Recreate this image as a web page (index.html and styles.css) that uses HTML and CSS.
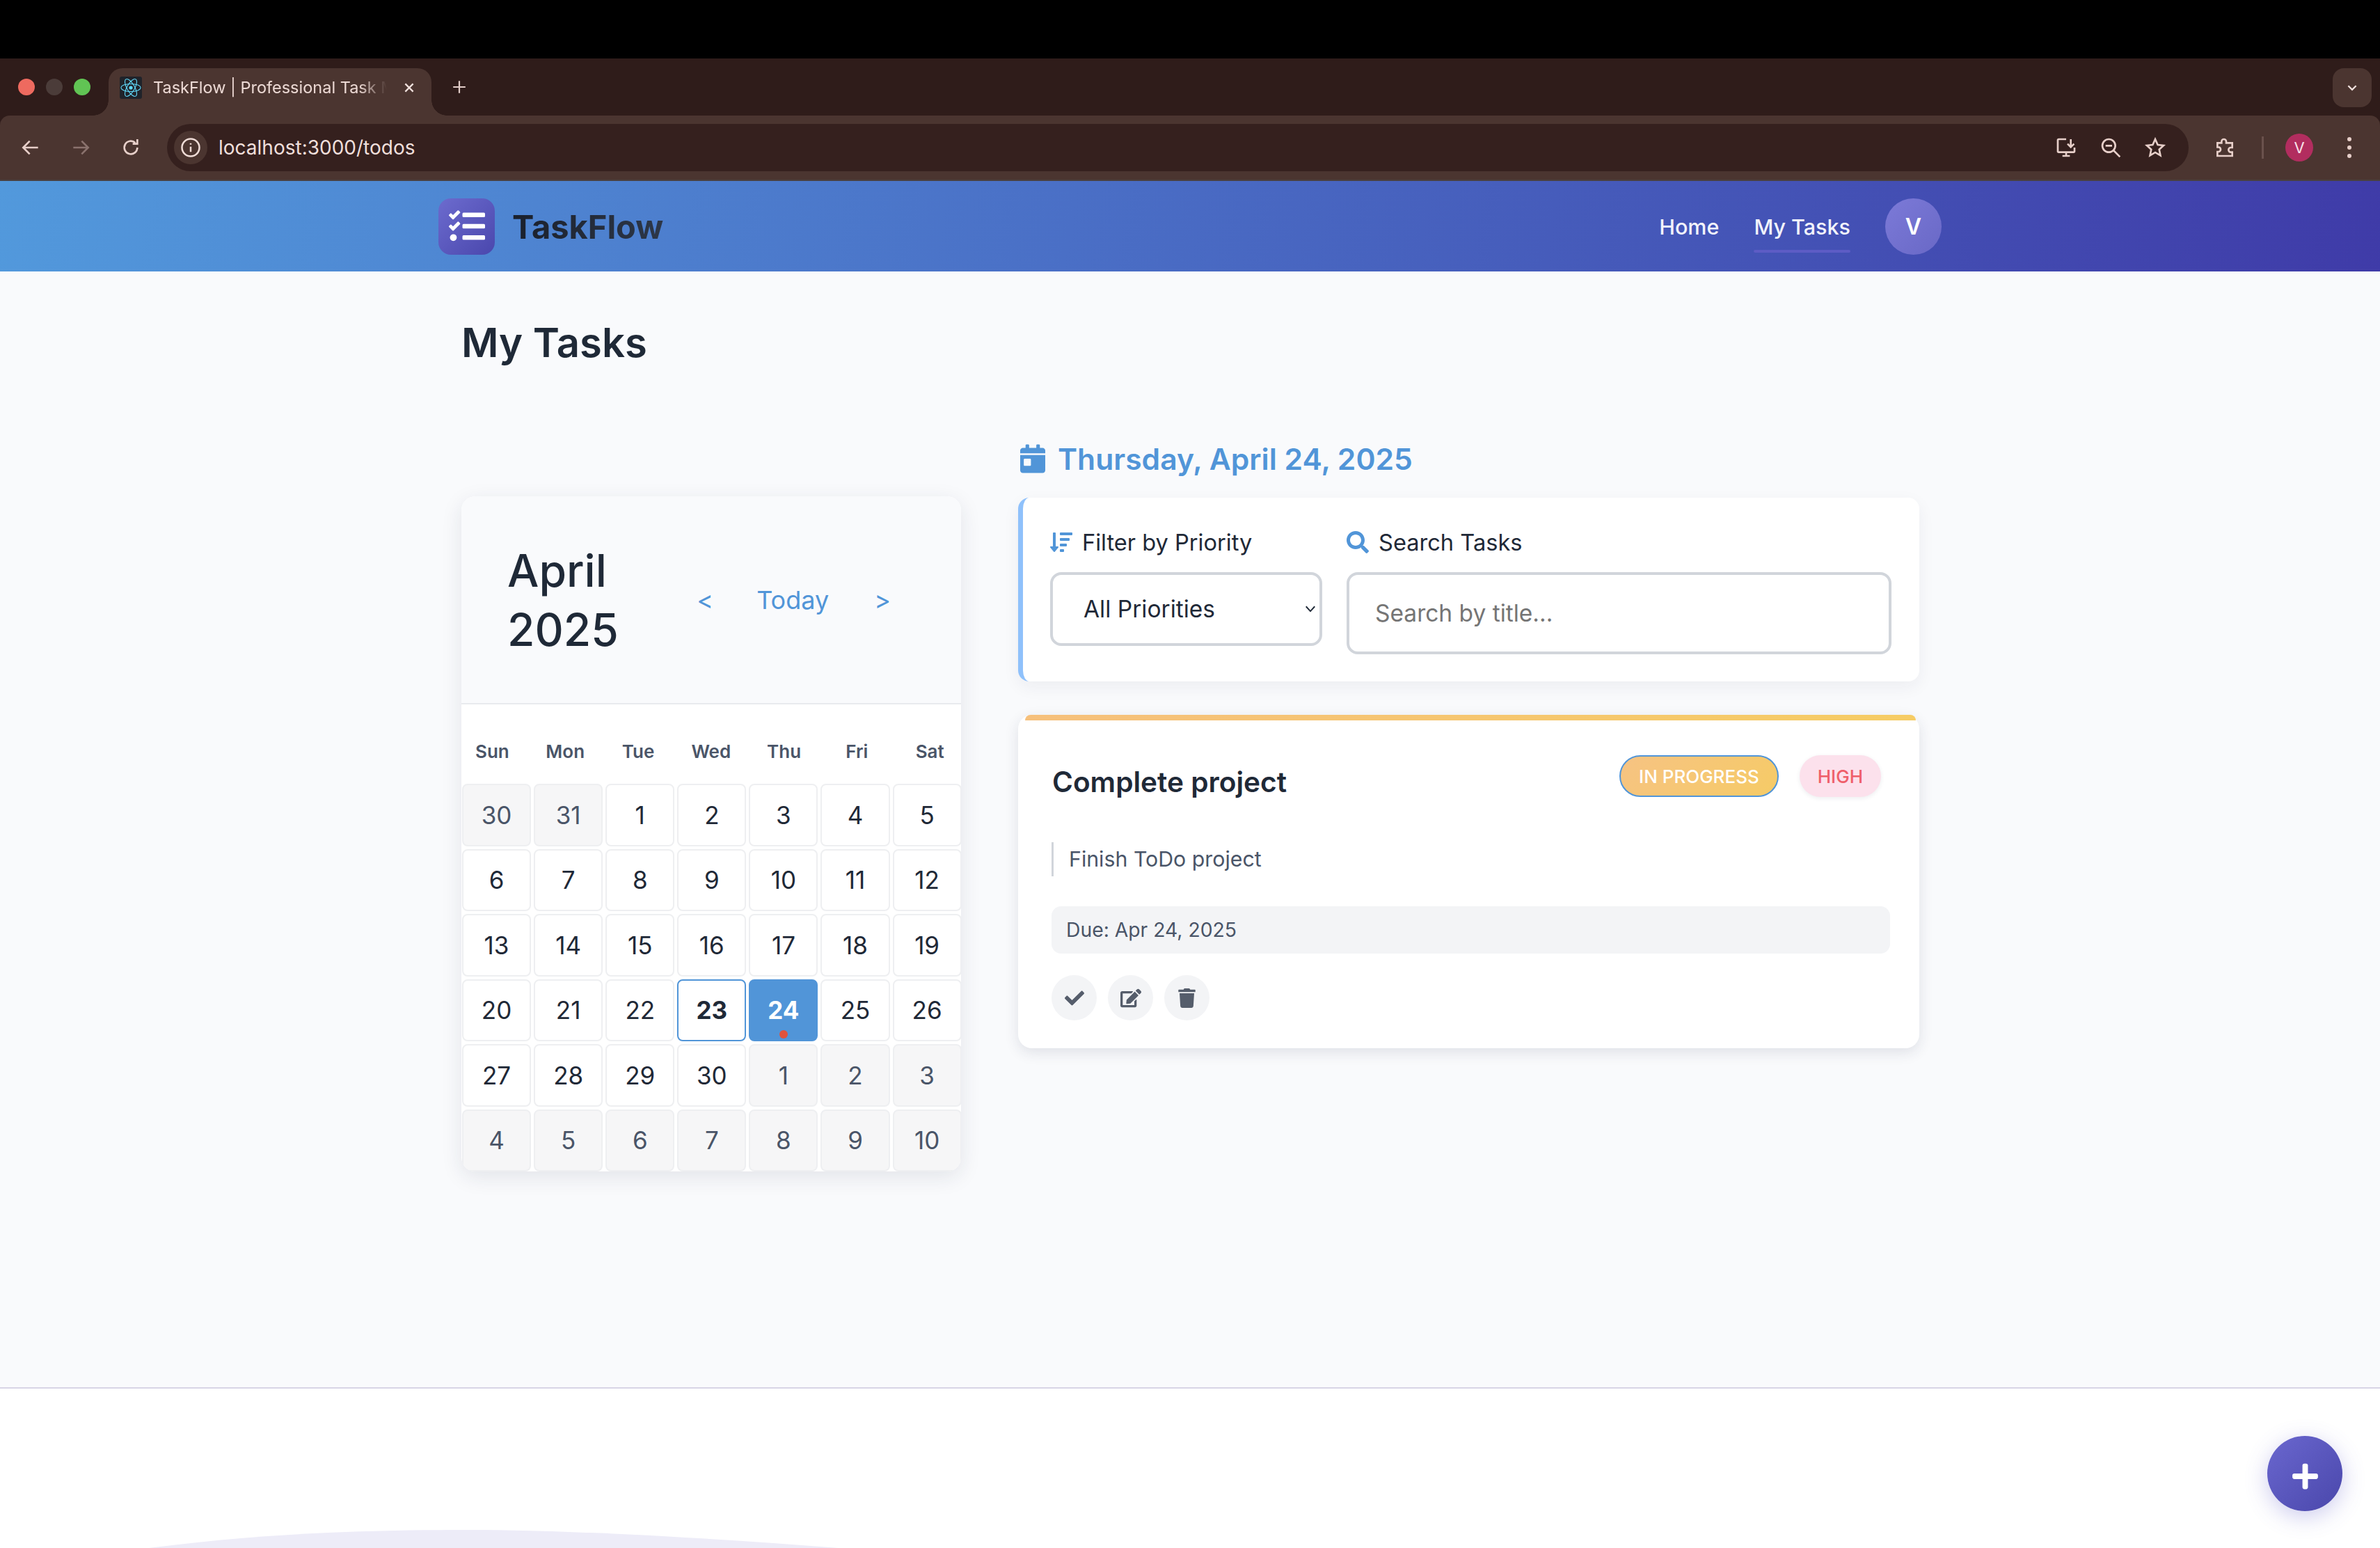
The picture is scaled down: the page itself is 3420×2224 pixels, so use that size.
FILE: index.html
```html
<!DOCTYPE html>
<html lang="en">
<head>
  <meta charset="UTF-8">
  <meta name="viewport" content="width=device-width, initial-scale=1.0">
  <title>TaskFlow | Professional Task Manager</title>
  <link rel="stylesheet" href="styles.css">
</head>
<body>
  <div class="screen-edge"></div>

  <div class="browser-chrome">
    <div class="tabstrip">
      <div class="traffic">
        <span class="light red"></span>
        <span class="light grey"></span>
        <span class="light green"></span>
      </div>
      <div class="tab">
        <svg class="favicon" viewBox="0 0 32 32">
          <rect width="32" height="32" rx="3" fill="#20232a"/>
          <g fill="none" stroke="#61dafb" stroke-width="1.1">
            <ellipse cx="16" cy="16" rx="14" ry="5.5"/>
            <ellipse cx="16" cy="16" rx="14" ry="5.5" transform="rotate(60 16 16)"/>
            <ellipse cx="16" cy="16" rx="14" ry="5.5" transform="rotate(120 16 16)"/>
          </g>
          <circle cx="16" cy="16" r="2.6" fill="#61dafb"/>
        </svg>
        <span class="tab-title">TaskFlow | Professional Task Manager</span>
        <svg class="tab-close" viewBox="0 0 16 16"><path d="M3 3l10 10M13 3L3 13"/></svg>
      </div>
      <svg class="new-tab" viewBox="0 0 20 20"><path d="M10 2v16M2 10h16"/></svg>
      <div class="tab-search">
        <svg viewBox="0 0 16 16"><path d="M3 5.5l5 5 5-5"/></svg>
      </div>
    </div>

    <div class="toolbar">
      <svg class="tool-icon" viewBox="0 0 24 24"><path d="M20 12H5M11 5l-7 7 7 7"/></svg>
      <svg class="tool-icon dim" viewBox="0 0 24 24"><path d="M4 12h15M13 5l7 7-7 7"/></svg>
      <svg class="tool-icon" viewBox="0 0 24 24"><path d="M19 12a7 7 0 1 1-2.2-5.1M19 3v5h-5"/></svg>
      <div class="omnibox">
        <div class="site-info">
          <svg viewBox="0 0 24 24"><circle cx="12" cy="12" r="10"/><path d="M12 11v6M12 7v1.6"/></svg>
        </div>
        <span class="url">localhost:3000/todos</span>
        <div class="omni-icons">
          <svg class="tool-icon" viewBox="0 0 24 24"><path d="M12 3H4a1 1 0 0 0-1 1v12a1 1 0 0 0 1 1h16a1 1 0 0 0 1-1v-4M8 21h8M12 17v4M17 3v8M13.5 8l3.5 3.500 3.500-3.500"/></svg>
          <svg class="tool-icon" viewBox="0 0 24 24"><circle cx="10" cy="10" r="7"/><path d="M15 15l7 7M6.500 10h7"/></svg>
          <svg class="tool-icon" viewBox="0 0 24 24"><path d="M12 3l2.700 6 6.300.7-4.700 4.300 1.300 6.500L12 17.200 6.400 20.500l1.300-6.500L3 9.700 9.300 9z"/></svg>
        </div>
      </div>
      <svg class="tool-icon ext" viewBox="0 0 24 24"><path d="M4 7h4.500V5.500a2.500 2.500 0 0 1 5 0V7H20v5h-1.500a2.500 2.500 0 0 0 0 5H20v4H4v-4.500h1a2.500 2.500 0 0 0 0-5H4z"/></svg>
      <span class="tool-divider"></span>
      <span class="profile">V</span>
      <div class="menu-dots"><span></span><span></span><span></span></div>
    </div>
    <div class="toolbar-edge"></div>
  </div>

  <header class="app-header">
    <div class="header-inner">
      <a class="brand">
        <span class="brand-mark">
          <svg viewBox="0 0 512 512"><path d="M139.61 35.5a12 12 0 0 0-17 0L58.93 98.81l-22.7-22.12a12 12 0 0 0-17 0L3.53 92.41a12 12 0 0 0 0 17l47.59 47.4a12.78 12.78 0 0 0 17.61 0l15.59-15.62L156.52 69a12.09 12.09 0 0 0 .09-17zm0 159.19a12 12 0 0 0-17 0l-63.68 63.72-22.7-22.1a12 12 0 0 0-17 0L3.53 252a12 12 0 0 0 0 17L51 316.5a12.77 12.77 0 0 0 17.6 0l15.7-15.69 72.2-72.22a12 12 0 0 0 .09-16.9zM64 368c-26.49 0-48.59 21.5-48.59 48S37.53 464 64 464a48 48 0 0 0 0-96zm432 16H208a16 16 0 0 0-16 16v32a16 16 0 0 0 16 16h288a16 16 0 0 0 16-16v-32a16 16 0 0 0-16-16zm0-320H208a16 16 0 0 0-16 16v32a16 16 0 0 0 16 16h288a16 16 0 0 0 16-16V80a16 16 0 0 0-16-16zm0 160H208a16 16 0 0 0-16 16v32a16 16 0 0 0 16 16h288a16 16 0 0 0 16-16v-32a16 16 0 0 0-16-16z"/></svg>
        </span>
        <span class="brand-name">TaskFlow</span>
      </a>
      <nav class="main-nav">
        <a class="nav-link">Home</a>
        <a class="nav-link active">My Tasks</a>
        <span class="avatar">V</span>
      </nav>
    </div>
  </header>

  <main class="page">
    <h1 class="page-title">My Tasks</h1>

    <div class="todo-layout">
      <section class="calendar">
        <div class="cal-header">
          <h2 class="cal-title">April 2025</h2>
          <div class="cal-nav">
            <button class="cal-btn prev">&lt;</button>
            <button class="cal-btn">Today</button>
            <button class="cal-btn">&gt;</button>
          </div>
        </div>
        <div class="cal-weekdays">
          <span>Sun</span><span>Mon</span><span>Tue</span><span>Wed</span><span>Thu</span><span>Fri</span><span>Sat</span>
        </div>
        <div class="cal-grid">
          <div class="day other">30</div><div class="day other">31</div><div class="day">1</div><div class="day">2</div><div class="day">3</div><div class="day">4</div><div class="day">5</div>
          <div class="day">6</div><div class="day">7</div><div class="day">8</div><div class="day">9</div><div class="day">10</div><div class="day">11</div><div class="day">12</div>
          <div class="day">13</div><div class="day">14</div><div class="day">15</div><div class="day">16</div><div class="day">17</div><div class="day">18</div><div class="day">19</div>
          <div class="day">20</div><div class="day">21</div><div class="day">22</div><div class="day today">23</div><div class="day selected">24<span class="task-dot"></span></div><div class="day">25</div><div class="day">26</div>
          <div class="day">27</div><div class="day">28</div><div class="day">29</div><div class="day">30</div><div class="day other">1</div><div class="day other">2</div><div class="day other">3</div>
          <div class="day other">4</div><div class="day other">5</div><div class="day other">6</div><div class="day other">7</div><div class="day other">8</div><div class="day other">9</div><div class="day other">10</div>
        </div>
      </section>

      <section class="tasks">
        <h2 class="date-heading">
          <svg viewBox="0 0 448 512"><path d="M0 464c0 26.500 21.500 48 48 48h352c26.500 0 48-21.500 48-48V192H0v272zm64-192c0-8.800 7.200-16 16-16h96c8.800 0 16 7.200 16 16v96c0 8.800-7.200 16-16 16H80c-8.800 0-16-7.200-16-16v-96zM400 64h-48V16c0-8.800-7.200-16-16-16h-32c-8.800 0-16 7.200-16 16v48H160V16c0-8.800-7.200-16-16-16h-32c-8.800 0-16 7.200-16 16v48H48C21.500 64 0 85.500 0 112v48h448v-48c0-26.500-21.500-48-48-48z"/></svg>
          Thursday, April 24, 2025
        </h2>

        <div class="filters">
          <div class="filter-group priority">
            <label class="filter-label">
              <svg viewBox="0 0 512 512"><path d="M304 416h-64a16 16 0 0 0-16 16v32a16 16 0 0 0 16 16h64a16 16 0 0 0 16-16v-32a16 16 0 0 0-16-16zm-128-64h-48V48a16 16 0 0 0-16-16H80a16 16 0 0 0-16 16v304H16c-14.190 0-21.370 17.240-11.290 27.310l80 96a16 16 0 0 0 22.620 0l80-96C197.350 369.260 190.220 352 176 352zm256-192H240a16 16 0 0 0-16 16v32a16 16 0 0 0 16 16h192a16 16 0 0 0 16-16v-32a16 16 0 0 0-16-16zm-64 128H240a16 16 0 0 0-16 16v32a16 16 0 0 0 16 16h128a16 16 0 0 0 16-16v-32a16 16 0 0 0-16-16zM496 32H240a16 16 0 0 0-16 16v32a16 16 0 0 0 16 16h256a16 16 0 0 0 16-16V48a16 16 0 0 0-16-16z"/></svg>
              Filter by Priority
            </label>
            <div class="select-wrap">
              <select class="priority-select">
                <option>All Priorities</option>
                <option>High</option>
                <option>Medium</option>
                <option>Low</option>
              </select>
              <svg class="select-arrow" viewBox="0 0 12 8"><path d="M1 1l5 5.500L11 1"/></svg>
            </div>
          </div>
          <div class="filter-group search">
            <label class="filter-label">
              <svg viewBox="0 0 512 512"><path d="M505 442.700L405.300 343c-4.500-4.500-10.600-7-17-7H372c27.600-35.300 44-79.700 44-128C416 93.100 322.900 0 208 0S0 93.100 0 208s93.100 208 208 208c48.300 0 92.700-16.400 128-44v16.300c0 6.400 2.500 12.500 7 17l99.700 99.700c9.400 9.400 24.600 9.400 33.900 0l28.300-28.300c9.400-9.400 9.400-24.600.1-34zM208 336c-70.700 0-128-57.200-128-128 0-70.700 57.200-128 128-128 70.700 0 128 57.200 128 128 0 70.700-57.200 128-128 128z"/></svg>
              Search Tasks
            </label>
            <input class="search-input" type="text" placeholder="Search by title...">
          </div>
        </div>

        <article class="task-card">
          <div class="task-stripe"></div>
          <div class="task-head">
            <h3 class="task-title">Complete project</h3>
            <div class="task-badges">
              <span class="badge progress">IN PROGRESS</span>
              <span class="badge high">HIGH</span>
            </div>
          </div>
          <p class="task-desc">Finish ToDo project</p>
          <div class="task-due">Due: Apr 24, 2025</div>
          <div class="task-actions">
            <button class="icon-btn"><svg class="ic-check" viewBox="0 0 512 512"><path d="M173.898 439.404l-166.400-166.400c-9.997-9.997-9.997-26.206 0-36.204l36.203-36.204c9.997-9.998 26.207-9.998 36.204 0L192 312.690 432.095 72.596c9.997-9.997 26.207-9.997 36.204 0l36.203 36.204c9.997 9.997 9.997 26.206 0 36.204l-294.400 294.401c-9.998 9.997-26.207 9.997-36.204-.001z"/></svg></button>
            <button class="icon-btn"><svg class="ic-edit" viewBox="0 0 576 512"><path d="M402.600 83.200l90.200 90.200c3.800 3.800 3.800 10 0 13.800L274.400 405.600l-92.800 10.300c-12.400 1.400-22.900-9.100-21.500-21.500l10.300-92.800L388.800 83.200c3.800-3.800 10-3.800 13.800 0zm162-22.900l-48.800-48.800c-15.200-15.200-39.900-15.200-55.200 0l-35.400 35.400c-3.800 3.800-3.800 10 0 13.800l90.200 90.200c3.800 3.800 10 3.800 13.800 0l35.400-35.400c15.200-15.300 15.200-40 0-55.200zM384 346.200V448H64V128h229.800c3.200 0 6.200-1.300 8.500-3.500l40-40c7.600-7.600 2.200-20.500-8.500-20.500H48C21.500 64 0 85.500 0 112v352c0 26.500 21.500 48 48 48h352c26.500 0 48-21.500 48-48V306.200c0-10.700-12.900-16-20.500-8.500l-40 40c-2.200 2.300-3.500 5.300-3.500 8.500z"/></svg></button>
            <button class="icon-btn"><svg class="ic-trash" viewBox="0 0 448 512"><path d="M432 32H312l-9.400-18.700A24 24 0 0 0 281.100 0H166.800a23.720 23.720 0 0 0-21.400 13.300L136 32H16A16 16 0 0 0 0 48v32a16 16 0 0 0 16 16h416a16 16 0 0 0 16-16V48a16 16 0 0 0-16-16zM53.200 467a48 48 0 0 0 47.900 45h245.800a48 48 0 0 0 47.900-45L416 128H32z"/></svg></button>
          </div>
        </article>
      </section>
    </div>
  </main>

  <footer class="page-footer">
    <svg class="footer-wave" viewBox="0 0 1000 30" preserveAspectRatio="none"><path d="M0 30C150 8 290 0 460 0C620 0 820 14 1000 30z"/></svg>
  </footer>

  <button class="fab">
    <svg viewBox="0 0 448 512"><path d="M416 208H272V64c0-17.670-14.330-32-32-32h-32c-17.670 0-32 14.330-32 32v144H32c-17.670 0-32 14.330-32 32v32c0 17.670 14.330 32 32 32h144v144c0 17.670 14.330 32 32 32h32c17.670 0 32-14.330 32-32V304h144c17.670 0 32-14.330 32-32v-32c0-17.670-14.330-32-32-32z"/></svg>
  </button>
</body>
</html>
```

FILE: styles.css
```css
* {
  box-sizing: border-box;
}

html, body {
  height: 100%;
}

body {
  margin: 0;
  display: flex;
  flex-direction: column;
  overflow: hidden;
  background-color: #f9fafc;
  color: #1f2937;
  font-family: Inter, "Liberation Sans", sans-serif;
}

h1, h2, h3, p {
  margin: 0;
}

button {
  border: none;
  background: none;
  font-family: inherit;
  padding: 0;
}

/* browser frame */
.screen-edge {
  height: 84px;
  flex: none;
  background-color: #000;
}

.browser-chrome {
  flex: none;
  background-color: #2f1c1a;
}

.tabstrip {
  height: 82px;
  display: flex;
}

.traffic {
  display: flex;
  gap: 16px;
  padding: 29px 0 0 26px;
  width: 156px;
}

.light {
  width: 24px;
  height: 24px;
  border-radius: 50%;
}

.light.red { background-color: #ee6a5f; }
.light.grey { background-color: #4b3c39; }
.light.green { background-color: #61c454; }

.tab {
  position: relative;
  width: 464px;
  height: 68px;
  margin-top: 14px;
  display: flex;
  align-items: flex-start;
  padding: 12px 0 0 16px;
  background-color: #4b3530;
  border-radius: 20px 20px 0 0;
}

.tab::before,
.tab::after {
  content: "";
  position: absolute;
  bottom: 0;
  width: 22px;
  height: 22px;
}

.tab::before {
  left: -22px;
  background: radial-gradient(circle at 0 0, #2f1c1a 21.500px, #4b3530 22px);
}

.tab::after {
  right: -22px;
  background: radial-gradient(circle at 100% 0, #2f1c1a 21.500px, #4b3530 22px);
}

.favicon {
  width: 32px;
  height: 32px;
  flex: none;
}

.tab-title {
  width: 336px;
  margin-left: 16px;
  overflow: hidden;
  white-space: nowrap;
  font-size: 23.500px;
  line-height: 32px;
  color: #ecd9d4;
  -webkit-mask-image: linear-gradient(to right, #000 88%, transparent);
  mask-image: linear-gradient(to right, #000 88%, transparent);
}

.tab-close {
  width: 18px;
  height: 18px;
  margin: 7px 0 0 23px;
  flex: none;
  fill: none;
  stroke: #f1e1dd;
  stroke-width: 2;
}

.new-tab {
  width: 22px;
  height: 22px;
  margin: 30px 0 0 29px;
  fill: none;
  stroke: #e2cdc8;
  stroke-width: 2;
}

.tab-search {
  width: 56px;
  height: 56px;
  margin: 14px 12px 0 auto;
  display: flex;
  align-items: center;
  justify-content: center;
  border-radius: 16px;
  background-color: #4b3530;
}

.tab-search svg {
  width: 18px;
  height: 18px;
  fill: none;
  stroke: #f1e1dd;
  stroke-width: 2;
}

.toolbar {
  height: 92px;
  display: flex;
  align-items: center;
  padding: 0 0 0 28px;
  background-color: #4b3530;
  border-radius: 14px 14px 0 0;
}

.tool-icon {
  width: 32px;
  height: 32px;
  flex: none;
  fill: none;
  stroke: #e7cfc9;
  stroke-width: 2;
}

.tool-icon.dim {
  stroke: #8a726d;
  margin-left: 40px;
}

.tool-icon + .tool-icon:not(.dim) {
  margin-left: 40px;
}

.omnibox {
  width: 2905px;
  height: 68px;
  margin-left: 36px;
  display: flex;
  align-items: center;
  padding: 0 32px 0 10px;
  border-radius: 34px;
  background-color: #35201e;
}

.site-info {
  width: 48px;
  height: 48px;
  display: flex;
  align-items: center;
  justify-content: center;
  border-radius: 50%;
  background-color: #4b3530;
}

.site-info svg {
  width: 30px;
  height: 30px;
  fill: none;
  stroke: #efdcd7;
  stroke-width: 2;
}

.url {
  margin-left: 16px;
  font-size: 28px;
  color: #efdfdb;
}

.omni-icons {
  display: flex;
  margin-left: auto;
  gap: 32px;
}

.omni-icons .tool-icon + .tool-icon {
  margin-left: 0;
}

.tool-icon.ext {
  margin-left: 36px;
}

.tool-divider {
  width: 3px;
  height: 32px;
  margin-left: 37px;
  background-color: #6a514c;
}

.profile {
  width: 40px;
  height: 40px;
  margin-left: 31px;
  display: flex;
  align-items: center;
  justify-content: center;
  border-radius: 50%;
  background-color: #b22d5f;
  color: #f8e3ea;
  font-size: 22px;
}

.menu-dots {
  display: flex;
  flex-direction: column;
  gap: 6px;
  margin-left: 49px;
}

.menu-dots span {
  width: 6px;
  height: 6px;
  border-radius: 50%;
  background-color: #e7cfc9;
}

.toolbar-edge {
  height: 2px;
  background-color: #4a403f;
}

/* app header */
.app-header {
  height: 130px;
  flex: none;
  background: linear-gradient(100deg, #5299dc 0%, #4a6fc6 45%, #3f3ba8 100%);
}

.header-inner {
  width: 2160px;
  height: 100%;
  margin: 0 auto;
  display: flex;
  align-items: center;
}

.brand {
  display: flex;
  align-items: center;
  gap: 25px;
}

.brand-mark {
  width: 81px;
  height: 81px;
  display: flex;
  align-items: center;
  justify-content: center;
  border-radius: 18px;
  background: linear-gradient(135deg, #6c6bce, #4a47ad);
}

.brand-mark svg {
  width: 52px;
  height: 52px;
  fill: #fff;
}

.brand-name {
  font-size: 47px;
  font-weight: 700;
  background: linear-gradient(90deg, #1a202c, #2d3748);
  -webkit-background-clip: text;
  background-clip: text;
  color: transparent;
}

.main-nav {
  margin-left: auto;
  display: flex;
  align-items: center;
  gap: 50px;
}

.nav-link {
  position: relative;
  font-size: 30.500px;
  font-weight: 500;
  color: #f2f3fb;
}

.nav-link.active::after {
  content: "";
  position: absolute;
  left: 0;
  right: 0;
  bottom: -19px;
  height: 4px;
  border-radius: 2px;
  background-color: #5d5cc5;
}

.avatar {
  width: 81px;
  height: 81px;
  display: flex;
  align-items: center;
  justify-content: center;
  border-radius: 50%;
  background: linear-gradient(135deg, #7c7ad8, #6968c6);
  color: #fff;
  font-size: 32px;
  font-weight: 600;
}

/* page */
.page {
  flex: 1;
  width: 2160px;
  margin: 0 auto;
  padding: 66px 33px 0;
}

.page-title {
  font-size: 58px;
  font-weight: 600;
  line-height: 72px;
}

.todo-layout {
  display: grid;
  grid-template-columns: 718px 1295px;
  gap: 82px;
  align-items: start;
  margin-top: 110px;
}

.calendar {
  margin-top: 75px;
  overflow: hidden;
  border-radius: 20px;
  background-color: #fff;
  box-shadow: 0 8px 30px rgba(30, 40, 70, 0.1);
}

.cal-header {
  height: 299px;
  display: flex;
  align-items: center;
  padding: 0 101px 0 66px;
  background-color: #f9fafc;
  border-bottom: 2px solid #e8eaee;
}

.cal-title {
  width: 200px;
  font-size: 64px;
  font-weight: 500;
  line-height: 85px;
}

.cal-nav {
  margin-left: auto;
  display: flex;
  align-items: center;
  gap: 65px;
}

.cal-btn {
  font-size: 36px;
  color: #5195d8;
}

.cal-btn.prev {
  margin-right: -3px;
}

.cal-weekdays {
  height: 114px;
  display: grid;
  grid-template-columns: repeat(7, 104.800px);
  margin-left: -8px;
  padding-top: 20px;
  align-items: center;
  text-align: center;
  font-size: 26px;
  font-weight: 600;
  color: #4a5568;
}

.cal-grid {
  display: grid;
  grid-template-columns: repeat(7, 99.100px);
  grid-auto-rows: 89.500px;
  gap: 4px;
  padding: 0 1px;
}

.day {
  position: relative;
  display: flex;
  align-items: center;
  justify-content: center;
  border: 2px solid #eeeff1;
  border-radius: 8px;
  font-size: 35px;
  color: #1f2937;
}

.day.other {
  background-color: #f6f6f7;
  color: #4a5568;
}

.day.today {
  border-color: #5195d8;
  font-weight: 700;
}

.day.selected {
  border-color: #5195d8;
  background-color: #5195d8;
  color: #fff;
  font-weight: 700;
}

.task-dot {
  position: absolute;
  left: 50%;
  bottom: 2px;
  width: 12px;
  height: 12px;
  margin-left: -6px;
  border-radius: 50%;
  background-color: #e0533d;
}

.date-heading {
  display: flex;
  align-items: center;
  gap: 18px;
  height: 42px;
  margin-left: 3px;
  font-size: 42.600px;
  font-weight: 600;
  color: #5195d8;
}

.date-heading svg {
  width: 36px;
  height: 42px;
  fill: currentColor;
}

.filters {
  display: flex;
  gap: 35px;
  height: 264px;
  margin-top: 35px;
  padding: 44px 40px 0 39px;
  border-left: 7px solid #8fc1fb;
  border-radius: 16px;
  background-color: #fff;
  box-shadow: 0 8px 24px rgba(30, 40, 70, 0.06);
}

.filter-group.priority {
  width: 391px;
  flex: none;
}

.filter-group.search {
  flex: 1;
}

.filter-label {
  display: flex;
  align-items: center;
  gap: 14px;
  height: 40px;
  font-size: 32.600px;
  font-weight: 400;
  color: #1f2937;
}

.filter-label svg {
  width: 32px;
  height: 32px;
  fill: #5195d8;
}

.select-wrap {
  position: relative;
  margin-top: 23px;
}

.priority-select {
  width: 100%;
  height: 106px;
  padding: 0 30px 0 44px;
  appearance: none;
  border: 4px solid #d1d5db;
  border-radius: 16px;
  background-color: #fff;
  font-family: inherit;
  font-size: 33.500px;
  color: #1f2937;
}

.select-arrow {
  position: absolute;
  right: 9px;
  top: 48px;
  width: 16px;
  height: 10px;
  fill: none;
  stroke: #1f2937;
  stroke-width: 1.5;
}

.search-input {
  display: block;
  width: 100%;
  height: 118px;
  margin-top: 23px;
  padding: 0 37px;
  border: 4px solid #d1d5db;
  border-radius: 16px;
  font-family: inherit;
  font-size: 33.500px;
  color: #1f2937;
}

.search-input::placeholder {
  color: #757575;
}

.task-card {
  height: 479px;
  margin-top: 48px;
  padding: 0 42px 0 48px;
  border-radius: 20px;
  background-color: #fff;
  box-shadow: 0 6px 20px rgba(30, 40, 70, 0.12);
}

.task-stripe {
  height: 8px;
  margin: 0 -37px 0 -38px;
  border-radius: 8px 8px 0 0;
  background: linear-gradient(90deg, #f6c07c, #f6cc64);
}

.task-head {
  display: flex;
  align-items: flex-start;
  justify-content: space-between;
  padding: 50px 13px 0 1px;
}

.task-title {
  margin-top: 12px;
  font-size: 40.600px;
  font-weight: 600;
  line-height: 54px;
}

.task-badges {
  display: flex;
  gap: 30px;
}

.badge {
  height: 60px;
  display: flex;
  align-items: center;
  padding: 0 26px;
  border-radius: 30px;
  font-size: 26px;
  font-weight: 500;
}

.badge.progress {
  border: 2px solid #5195d8;
  background: linear-gradient(135deg, #f6c383, #f6cb66);
  color: #fff;
}

.badge.high {
  background-color: #fce1ec;
  color: #ef5f6a;
  box-shadow: 0 2px 6px rgba(30, 40, 70, 0.08);
}

.task-desc {
  height: 49px;
  margin-top: 59px;
  padding-left: 22px;
  border-left: 3px solid #d1d5db;
  font-size: 30.300px;
  line-height: 49px;
  color: #4a5568;
}

.task-due {
  height: 68px;
  margin-top: 43px;
  padding-left: 21px;
  border-radius: 14px;
  background-color: #f3f4f6;
  font-size: 28.300px;
  line-height: 68px;
  color: #4a5568;
}

.task-actions {
  display: flex;
  gap: 16px;
  margin-top: 31px;
}

.icon-btn {
  width: 65px;
  height: 65px;
  display: flex;
  align-items: center;
  justify-content: center;
  border-radius: 50%;
  background-color: #f3f4f6;
}

.icon-btn svg {
  height: 28px;
  fill: #555d6b;
}

.ic-check { width: 28px; }
.ic-edit { width: 30px; }
.ic-trash { width: 25px; }

/* footer */
.page-footer {
  height: 231px;
  flex: none;
  position: relative;
  overflow: hidden;
  background-color: #fff;
  border-top: 2px solid #d8d5e6;
}

.footer-wave {
  position: absolute;
  left: 214px;
  bottom: 0;
  width: 991px;
  height: 26px;
  fill: #edecf8;
}

.fab {
  position: absolute;
  left: 3258px;
  top: 2063px;
  width: 108px;
  height: 108px;
  display: flex;
  align-items: center;
  justify-content: center;
  border-radius: 50%;
  background: linear-gradient(135deg, #6a67cf, #4a47ab);
  box-shadow: 0 8px 32px rgba(90, 85, 200, 0.3);
}

.fab svg {
  width: 37px;
  height: 42px;
  margin-top: 8px;
  fill: #fff;
}
```
